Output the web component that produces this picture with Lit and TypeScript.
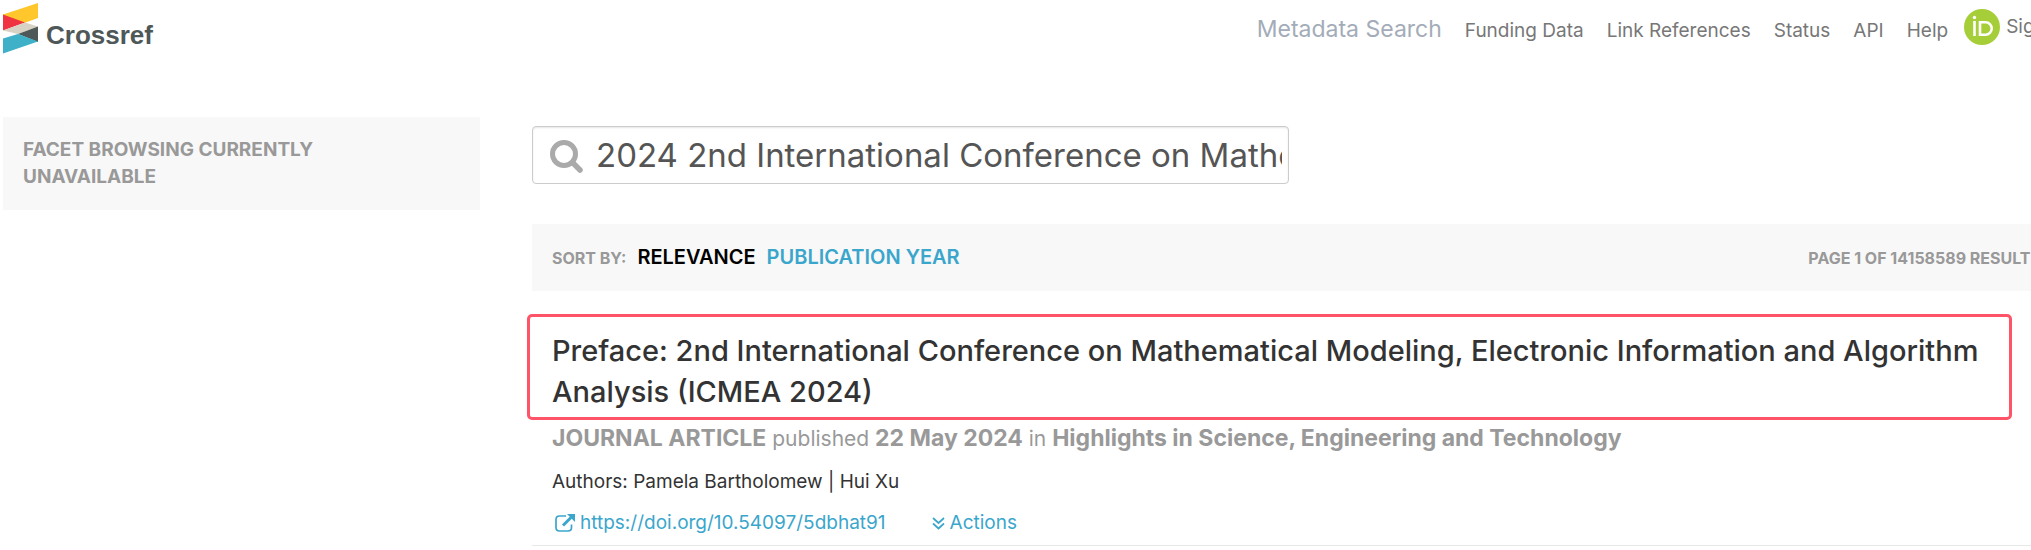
import { LitElement, html, css } from "lit";
import { customElement, state } from "lit/decorators.js";

@customElement("app-root")
export class AppRoot extends LitElement {
  @state() private query =
    "2024 2nd International Conference on Mathematical Modeling, Electronic Information and Algorithm Analysis";

  private links = ["Funding Data", "Link References", "Status", "API", "Help"];

  static styles = css`
    :host {
      display: block;
      overflow: hidden;
      background: #fff;
      color: #333;
      font: 400 19px/28px Inter, "Liberation Sans", sans-serif;
    }
    a {
      color: #3ba6cc;
      text-decoration: none;
    }
    /* The fixed-gutter container is wider than the window, so its right gutter is clipped. */
    .container {
      margin: 0 -36px 0 3px;
    }
    .header {
      display: flex;
      justify-content: space-between;
      align-items: flex-start;
      height: 117px;
    }
    .brand {
      display: flex;
      align-items: flex-start;
      gap: 7px;
      padding-top: 3px;
      color: #4f5858;
      font: 700 26px/36px "Liberation Sans", Arial, sans-serif;
    }
    .brand span {
      padding-top: 14px;
    }
    .brand svg {
      display: block;
    }
    .nav {
      display: flex;
      align-items: baseline;
      gap: 23px;
      padding-top: 15px;
      white-space: nowrap;
    }
    .nav a {
      color: #777;
    }
    .nav .current {
      color: #a3acb8;
      font-size: 23px;
    }
    .account {
      display: flex;
      gap: 6px;
      margin: 9px 0 0 16px;
      line-height: 36px;
      color: #777;
      white-space: nowrap;
    }
    .right {
      display: flex;
      align-items: flex-start;
    }
    .columns {
      display: grid;
      grid-template-columns: 477px minmax(0, 1fr);
      column-gap: 52px;
      align-items: start;
    }
    .facets {
      margin: 0;
      padding: 19px 130px 20px 20px;
      background: #f8f8f8;
      color: #999;
      font-size: 19px;
      font-weight: 700;
      line-height: 27px;
    }
    .search {
      display: flex;
      align-items: center;
      box-sizing: border-box;
      width: 757px;
      height: 58px;
      margin: 9px 0 40px;
      padding: 0 6px 0 16px;
      gap: 12px;
      border: 1px solid #ccc;
      border-radius: 4px;
      box-shadow: inset 0 1px 2px rgba(0, 0, 0, 0.1);
    }
    .search label {
      display: flex;
    }
    .search input {
      flex: 1;
      min-width: 0;
      padding: 0;
      border: 0;
      outline: 0;
      background: none;
      color: #555;
      font: 400 33px/44px Inter, "Liberation Sans", sans-serif;
    }
    .sort {
      display: flex;
      justify-content: space-between;
      align-items: baseline;
      padding: 19px 26px 19px 20px;
      background: #f8f8f8;
      color: #999;
      font-weight: 700;
      font-size: 16px;
      white-space: nowrap;
    }
    .options {
      display: flex;
      align-items: baseline;
      gap: 11px;
    }
    .options a {
      font-size: 20px;
      font-weight: 600;
    }
    .options .active {
      color: #000;
    }
    .result {
      border-bottom: 1px solid #e8e8e8;
    }
    .title {
      margin: 23px 55px 0 -5px;
      padding: 13px 20px 5px 22px;
      border: 3px solid #ff5468;
      border-radius: 5px;
      font-size: 29px;
      font-weight: 500;
      line-height: 41px;
    }
    .details {
      padding: 4px 20px 8px;
    }
    .details p {
      margin: 0;
    }
    .details .source {
      color: #999;
      font-size: 21px;
      margin-bottom: 15px;
    }
    .source b {
      font-size: 23px;
    }
    .details .authors {
      margin-bottom: 13px;
    }
    .actions {
      display: flex;
      gap: 46px;
    }
    .actions a {
      display: flex;
      align-items: center;
      gap: 5px;
    }
    .actions .doi {
      padding-left: 3px;
    }
  `;

  private onInput(e: Event) {
    this.query = (e.target as HTMLInputElement).value;
  }

  render() {
    return html`
      <header class="container header">
        <a class="brand" href="#">
          <svg width="36" height="51" viewBox="0 0 36 51" aria-hidden="true">
            <path d="M0 11.500 35 0v15L20 20.500 0 12z" fill="#ffc72c" />
            <path d="M0 11.500 22 19.500 0 27.500z" fill="#ef3340" />
            <path d="M0 27.500 22 19.500 35 23.500 15 31 0 35z" fill="#d8d2c4" />
            <path d="M0 27.500 15 31 0 36z" fill="#fff" />
            <path d="M15 31 35 23.500V39z" fill="#4f5858" />
            <path d="M0 35.500 15 31 35 38.500 0 50.500z" fill="#3eb1c8" />
          </svg>
          <span>Crossref</span>
        </a>
        <div class="right">
          <nav class="nav">
            <a class="current" href="#">Metadata Search</a>
            ${this.links.map((l) => html`<a href="#">${l}</a>`)}
          </nav>
          <a class="account" href="#">
            <svg width="36" height="36" viewBox="0 0 36 36" aria-hidden="true">
              <circle cx="18" cy="18" r="18" fill="#a6ce39" />
              <circle cx="10.500" cy="8.500" r="1.700" fill="#fff" />
              <path d="M10.500 12v15" stroke="#fff" stroke-width="2.600" />
              <path d="M16 13.300h5.500a6.200 6.200 0 0 1 0 12.400H16z" fill="none" stroke="#fff" stroke-width="2.600" />
            </svg>
            Sign in
          </a>
        </div>
      </header>
      <div class="container columns">
        <aside><h2 class="facets">FACET BROWSING CURRENTLY UNAVAILABLE</h2></aside>
        <main>
          <form class="search" role="search">
            <label for="q" aria-label="Search">
              <svg width="35" height="35" viewBox="0 0 35 35" fill="none" stroke="#aaa" aria-hidden="true">
                <circle cx="15" cy="16" r="11.500" stroke-width="5" />
                <path d="m23.500 24.500 7.500 7.500" stroke-width="5.500" stroke-linecap="round" />
              </svg>
            </label>
            <input id="q" type="text" .value=${this.query} @input=${this.onInput} />
          </form>
          <div class="sort">
            <div class="options">
              <span>SORT BY:</span>
              <a class="active" href="#">RELEVANCE</a>
              <a href="#">PUBLICATION YEAR</a>
            </div>
            <span>PAGE 1 OF 14158589 RESULTS</span>
          </div>
          <article class="result">
            <h3 class="title">
              Preface: 2nd International Conference on Mathematical Modeling, Electronic Information and Algorithm
              Analysis (ICMEA 2024)
            </h3>
            <div class="details">
              <p class="source">
                <b>JOURNAL ARTICLE</b> published <b>22 May 2024</b> in
                <b>Highlights in Science, Engineering and Technology</b>
              </p>
              <p class="authors">Authors: Pamela Bartholomew | Hui Xu</p>
              <div class="actions">
                <a class="doi" href="#">
                  <svg width="20" height="18" viewBox="0 0 20 18" fill="none" stroke="currentColor" aria-hidden="true">
                    <path d="M11 2H4.500Q1 2 1 5.500v8Q1 17 4.500 17h8.500q3.500 0 3.500-3.500V10.500" stroke-width="1.700" />
                    <path d="m8 11.500 8-8" stroke-width="3" />
                    <path d="M12 0h8v8z" fill="currentColor" stroke="none" />
                  </svg>
                  https://doi.org/10.54097/5dbhat91
                </a>
                <a href="#">
                  <svg width="13" height="13" viewBox="0 0 13 13" fill="none" stroke="currentColor" stroke-width="1.700" aria-hidden="true">
                    <path d="m1 1 5.500 5L12 1M1 6.500l5.500 5 5.500-5" />
                  </svg>
                  Actions
                </a>
              </div>
            </div>
          </article>
        </main>
      </div>
    `;
  }
}
